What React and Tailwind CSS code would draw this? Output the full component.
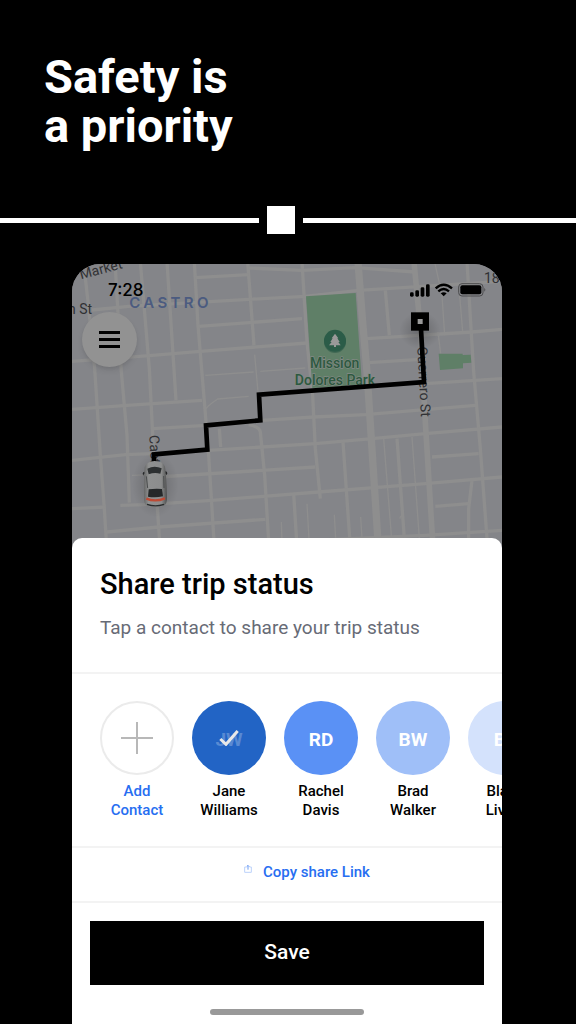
import React from "react";
import { clsx } from "clsx";

const contacts = [
  { first: "Jane", last: "Williams", initials: "JW", color: "bg-[#2264c5]", selected: true },
  { first: "Rachel", last: "Davis", initials: "RD", color: "bg-[#5a91f5]" },
  { first: "Brad", last: "Walker", initials: "BW", color: "bg-[#9fbff8]" },
  { first: "Blake", last: "Lively", initials: "BL", color: "bg-[#d4e2fc]" },
];

const avenues = [
  "M858 0 872 180 885 330 905 640 920 870",
];

const mainStreets = [
  "M1026 0 1045 200 1060 480 1084 870",
];

const streets = [
  "M38 30 47 110 68 320 85 580 97 740 105 870",
  "M130 15 148 330 165 520 172 722",
  "M205 0 232 320 245 575 265 870",
  "M285 0 312 415",
  "M367 0 378 190 398 430 410 580 428 870",
  "M527 0 546 250",
  "M690 0 705 240 722 400 730 560 745 710",
  "M1185 0 1205 330 1225 560 1248 870",
  "M940 85 952 220",
  "M530 488 Q562 494 565 510L578 640 592 870",
  "M442 500 446 555",
  "M813 540 836 870",
  "M665 695 676 870",
  "M975 530 1000 870",
  "M1200 655 1190 740 1190 870",
  "M60 144 170 133 530 112 700 103 860 85 1290 58",
  "M370 47 530 38",
  "M530 18 690 25 850 17 1030 30",
  "M380 193 690 170",
  "M0 298 232 281 385 268 705 243",
  "M885 230 1200 210 1290 202",
  "M890 302 1045 292",
  "M0 442 165 430 390 415",
  "M1060 365 1290 350",
  "M570 475 725 465 880 458 1210 430",
  "M245 500 400 490",
  "M0 595 160 578 240 575",
  "M410 565 730 545 900 530 1060 515 1290 495",
  "M260 645 730 615",
  "M145 730 220 728 420 715 740 690 1060 665 1290 645",
  "M0 740 100 735",
  "M105 810 260 795 580 772",
  "M1080 585 1220 575",
  "M1090 733 1190 725",
  "M590 845 720 835 1060 820 1290 805",
];

const lanes = [
  "M548 278 558 390",
  "M1088 0 1110 100 1118 220",
  "M1163 100 1172 210",
  "M400 340 545 330",
  "M565 328 700 318",
  "M402 440 Q406 432 437 411L530 403",
  "M935 530 962 870",
  "M1020 525 1045 870",
  "M1098 210 1106 275",
  "M628 780 630 840",
  "M705 725 712 850",
  "M787 758 791 830",
  "M866 765 870 830",
  "M180 640 240 638",
  "M984 770 Q984 758 996 762",
];

function CityMap() {
  return (
    <svg
      className="absolute inset-0 h-full w-full"
      viewBox="0 6 1290 852"
      preserveAspectRatio="xMidYMin slice"
      fontFamily="Roboto, sans-serif"
      aria-hidden="true"
    >
      <defs>
        <radialGradient id="glow">
          <stop offset="0" stopColor="#000" stopOpacity="0.22" />
          <stop offset="1" stopColor="#000" stopOpacity="0" />
        </radialGradient>
        <linearGradient id="body" x1="0" x2="1" y1="0" y2="0">
          <stop offset="0" stopColor="#666767" />
          <stop offset="0.2" stopColor="#8f9090" />
          <stop offset="0.75" stopColor="#8c8d8d" />
          <stop offset="1" stopColor="#4d4e4e" />
        </linearGradient>
      </defs>

      <rect y="0" width="1290" height="870" fill="#848589" />
      <g fill="none" stroke="#8e8e8e">
        {lanes.map((d) => <path key={d} d={d} strokeWidth="4" />)}
        {streets.map((d) => <path key={d} d={d} strokeWidth="10" />)}
        {mainStreets.map((d) => <path key={d} d={d} strokeWidth="17" />)}
        {avenues.map((d) => <path key={d} d={d} strokeWidth="22" />)}
      </g>

      {/* parks */}
      <path d="M702 103 851 93 870 368 721 378Z" fill="#5f7f67" />
      <path d="M1100 275H1172V279L1196 278 1198 302 1173 304V319L1104 324Z" fill="#5f7f67" />
      <circle cx="789" cy="240" r="33" fill="#235441" opacity="0.5" />
      <circle cx="789" cy="236" r="33" fill="#2b5c48" />
      <path d="M789 215 799 229H796L803 240H799L806 250H792V255H786V250H771L779 240H775L782 229H779Z" fill="#999" />
      <g fill="#2d5940" stroke="#848a86" strokeWidth="4" paintOrder="stroke" textAnchor="middle" fontSize="42" fontWeight="500">
        <text x="788" y="318">Mission</text>
        <text x="789" y="368">Dolores Park</text>
      </g>

      <g fill="#303134" fontSize="42">
        <text transform="translate(27 52) rotate(-15)">Market</text>
        <text x="-12" y="157">h St</text>
        <text x="1236" y="64">18th</text>
        <text transform="translate(1036 254) rotate(87)">Guerrero St</text>
        <text transform="translate(232 520) rotate(87)">Castro</text>
      </g>
      <text x="172" y="138" fill="#4b5b80" fontSize="45" fontWeight="600" letterSpacing="10" fontFamily="Inter, sans-serif">
        CASTRO
      </text>

      {/* route */}
      <ellipse cx="1044" cy="205" rx="62" ry="56" fill="url(#glow)" />
      <path
        d="M246 605V577L406 563 402 490 565 475 561 398 1056 360 1046 185"
        fill="none"
        stroke="#000"
        strokeWidth="14"
      />
      <rect x="1017" y="151" width="54" height="55" fill="#000" />
      <rect x="1037" y="171" width="15" height="15" fill="#999" />

      {/* car */}
      <ellipse cx="250" cy="668" rx="70" ry="98" fill="url(#glow)" />
      <path d="M212 635Q212 628 222 630V636Q215 633 214 641ZM286 634Q286 626 276 628V636Q283 633 284 640Z" fill="#252627" />
      <path
        d="M218 615Q224 598 248 597Q273 598 279 614Q283 640 285 705Q286 726 275 731Q250 739 225 731Q215 726 216 705Q216 640 218 615Z"
        fill="url(#body)"
      />
      <path d="M226 620Q247 609 269 619L265 635Q247 630 230 637Z" fill="#2d3031" />
      <path d="M230 682Q250 679 270 681L273 703Q250 708 228 704Z" fill="#252829" />
      <path d="M223 643 227 678M275 642 276 678" stroke="#4b4d4e" strokeWidth="3" />
      <path d="M223 710Q250 721 279 709" fill="none" stroke="#bd4a34" strokeWidth="7" />
      <path d="M225 727Q250 736 276 727" fill="none" stroke="#292b2c" strokeWidth="4" />
    </svg>
  );
}

function StatusBar() {
  return (
    <div className="relative flex items-center justify-between pl-9 pr-4 pt-4 text-black">
      <span className="font-[Inter] text-[17px] font-medium leading-5">7:28</span>
      <svg className="h-4 w-[76px]" viewBox="0 0 228 48" aria-hidden="true">
        <rect x="0" y="31" width="11" height="13" rx="4" />
        <rect x="16" y="25" width="11" height="19" rx="4" />
        <rect x="32" y="16" width="11" height="28" rx="4" />
        <rect x="48" y="7" width="11" height="37" rx="4" />
        <g fill="none" stroke="#000" strokeWidth="7">
          <path d="M77 19Q101 -3 126 19" />
          <path d="M85 28Q101 14 117 28" />
        </g>
        <path d="M92 34Q101 27 110 34L101 43Z" />
        <rect x="146" y="5" width="73" height="37" rx="10" fill="none" stroke="#4c4c4e" strokeWidth="3" />
        <rect x="151" y="10" width="63" height="27" rx="6" />
        <path d="M223 18Q229 23 223 29Z" fill="#4c4c4e" />
      </svg>
    </div>
  );
}

function Contact({ contact }) {
  return (
    <button className="flex w-[74px] shrink-0 flex-col items-center gap-[7px]">
      <span
        className={clsx(
          "relative flex size-[74px] items-center justify-center rounded-full pt-1 text-[19px] font-bold",
          contact.color,
          contact.selected ? "text-white/25" : "text-white"
        )}
      >
        {contact.initials}
        {contact.selected && (
          <svg className="absolute inset-0 m-auto h-4 w-5" viewBox="0 0 60 48" fill="none" aria-hidden="true">
            <path d="M4 27 21 43 56 3" stroke="#e8e8e8" strokeWidth="9" />
          </svg>
        )}
      </span>
      <span className="text-[15px] font-medium leading-[19px] text-black">
        {contact.first}
        <br />
        {contact.last}
      </span>
    </button>
  );
}

export default function App() {
  return (
    <main className="flex min-h-screen flex-col overflow-hidden bg-black font-[Roboto,sans-serif]">
      <h1 className="px-11 pt-[52px] text-[47px] font-bold leading-[49px] text-white">
        Safety is
        <br />
        a priority
      </h1>

      <div className="mt-14 flex items-center gap-2">
        <div className="h-[5px] w-[45%] bg-white" />
        <div className="size-7 bg-white" />
        <div className="h-[5px] flex-1 bg-white" />
      </div>

      <div className="ml-[72px] mr-[74px] mt-[30px] flex flex-1 flex-col overflow-hidden rounded-t-[28px] bg-[#848589]">
        <div className="relative h-[284px] shrink-0">
          <CityMap />
          <StatusBar />
          <button
            aria-label="Menu"
            className="relative ml-2.5 mt-3 flex size-[55px] items-center justify-center rounded-full bg-[#929292] shadow-md"
          >
            <span className="flex w-[21px] flex-col gap-1">
              <span className="h-[3px] bg-black" />
              <span className="h-[3px] bg-black" />
              <span className="h-[3px] bg-black" />
            </span>
          </button>
        </div>

        <section className="relative -mt-2.5 flex flex-1 flex-col rounded-t-[10px] bg-white">
          <div className="border-b-2 border-[#f3f3f3] px-7 pb-[30px] pt-7">
            <h2 className="text-[29px] font-medium leading-9 text-black">Share trip status</h2>
            <p className="mt-3 text-[19px] leading-7 text-[#676b76]">Tap a contact to share your trip status</p>
          </div>

          <div className="flex gap-[18px] overflow-hidden border-b-2 border-[#f3f3f3] px-7 pb-[26px] pt-[27px]">
            <button className="flex w-[74px] shrink-0 flex-col items-center gap-[7px]">
              <span className="flex size-[74px] items-center justify-center rounded-full border-2 border-[#ebebeb]">
                <svg className="size-8" viewBox="0 0 32 32" stroke="#b8b8b8" strokeWidth="2" aria-hidden="true">
                  <path d="M16 0V32M0 16H32" />
                </svg>
              </span>
              <span className="text-[15px] font-medium leading-[19px] text-[#276ef1]">
                Add
                <br />
                Contact
              </span>
            </button>
            {contacts.map((contact) => (
              <Contact key={contact.initials} contact={contact} />
            ))}
          </div>

          <button className="flex h-[55px] items-center justify-center gap-[11px] border-b-2 border-[#f3f3f3] pb-1 pl-10 text-[15px] font-medium text-[#276ef1]">
            <svg className="mb-2 size-2" viewBox="0 0 24 24" fill="none" strokeWidth="3" aria-hidden="true">
              <path d="M7 6H2V22H22V6H17" stroke="#bcd2fa" />
              <path d="M12 14V2M8 5 12 1 16 5" stroke="#6d9df5" />
            </svg>
            Copy share Link
          </button>

          <div className="flex flex-1 flex-col px-[18px] pt-[18px]">
            <button className="h-16 bg-black text-[21px] font-medium text-white">Save</button>
            <div className="mx-auto mb-2 mt-6 h-1.5 w-[154px] rounded-full bg-[#999]" />
          </div>
        </section>
      </div>
    </main>
  );
}
